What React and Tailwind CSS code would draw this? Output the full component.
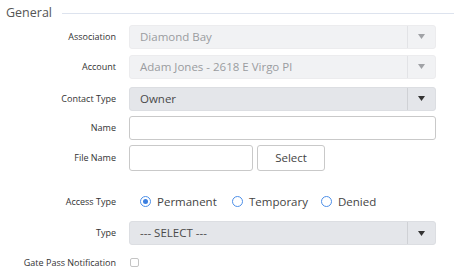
import { useState } from 'react'

const font = { fontFamily: '"Open Sans", "Noto Sans", sans-serif' }

function Row({ label, className = '', children }) {
  return (
    <div className={`flex items-center ${className}`}>
      <div className="w-[117px] shrink-0 pr-[1px] text-right text-[9px] text-[#333]">{label}</div>
      <div className="ml-[12px] flex flex-1 items-center">{children}</div>
    </div>
  )
}

function SelectBox({ value, disabled }) {
  return (
    <div
      className={`flex h-[24px] w-[307px] items-center rounded-[3px] border ${
        disabled ? 'border-[#ececee] bg-[#f1f2f4] text-[#9a9ca0]' : 'border-[#dcdee2] bg-[#e4e6ea] text-[#4a4a4a]'
      }`}
    >
      <span className="flex-1 pl-[10px] text-[11.5px]">{value}</span>
      <span className={`flex h-full w-[28px] items-center justify-center border-l ${disabled ? 'border-[#e2e3e6]' : 'border-[#cfd1d5]'}`}>
        <svg width="7" height="5" viewBox="0 0 7 5">
          <path d="M0 0h7L3.5 5z" fill={disabled ? '#a0a2a6' : '#333'} />
        </svg>
      </span>
    </div>
  )
}

function Radio({ label, checked, onClick }) {
  return (
    <button onClick={onClick} className="flex items-center gap-[6px] text-[11.5px] text-[#444]">
      <span className="flex h-[11px] w-[11px] items-center justify-center rounded-full border border-[#4d8fe8] bg-white">
        {checked && <span className="h-[5px] w-[5px] rounded-full bg-[#3b7fe0]" />}
      </span>
      {label}
    </button>
  )
}

export default function App() {
  const [access, setAccess] = useState('Permanent')

  return (
    <div className="h-[280px] w-[454px] overflow-hidden bg-white" style={font}>
      <div className="flex items-center pl-[6px] pt-[4px]">
        <span className="text-[12.5px] text-[#555]">General</span>
        <span className="ml-[10px] h-px flex-1 bg-[#dde3ee]" />
      </div>

      <Row label="Association" className="mt-[2px]">
        <SelectBox value="Diamond Bay" disabled />
      </Row>
      <Row label="Account" className="mt-[6px]">
        <SelectBox value="Adam Jones - 2618 E Virgo Pl" disabled />
      </Row>
      <Row label="Contact Type" className="mt-[8px]">
        <SelectBox value="Owner" />
      </Row>
      <Row label="Name" className="mt-[5px]">
        <input className="h-[24px] w-[307px] rounded-[3px] border border-[#c9c9c9] bg-white px-2 text-[11.5px] outline-none" />
      </Row>
      <Row label="File Name" className="mt-[5px]">
        <input className="h-[26px] w-[124px] rounded-[3px] border border-[#c9c9c9] bg-white px-2 text-[11.5px] outline-none" />
        <button className="ml-[4px] h-[26px] w-[68px] rounded-[3px] border border-[#c9c9c9] bg-white text-[11.5px] text-[#444]">
          Select
        </button>
      </Row>

      <Row label="Access Type" className="mt-[22px]">
        <div className="flex items-center pl-[11px]">
          <div className="w-[92px]">
            <Radio label="Permanent" checked={access === 'Permanent'} onClick={() => setAccess('Permanent')} />
          </div>
          <div className="w-[89px]">
            <Radio label="Temporary" checked={access === 'Temporary'} onClick={() => setAccess('Temporary')} />
          </div>
          <Radio label="Denied" checked={access === 'Denied'} onClick={() => setAccess('Denied')} />
        </div>
      </Row>
      <Row label="Type" className="mt-[11px]">
        <SelectBox value="--- SELECT ---" />
      </Row>
      <Row label="Gate Pass Notification" className="mt-[11px]">
        <span className="ml-[1px] h-[9px] w-[9px] rounded-[2px] border border-[#c4c4c4] bg-white" />
      </Row>
    </div>
  )
}
